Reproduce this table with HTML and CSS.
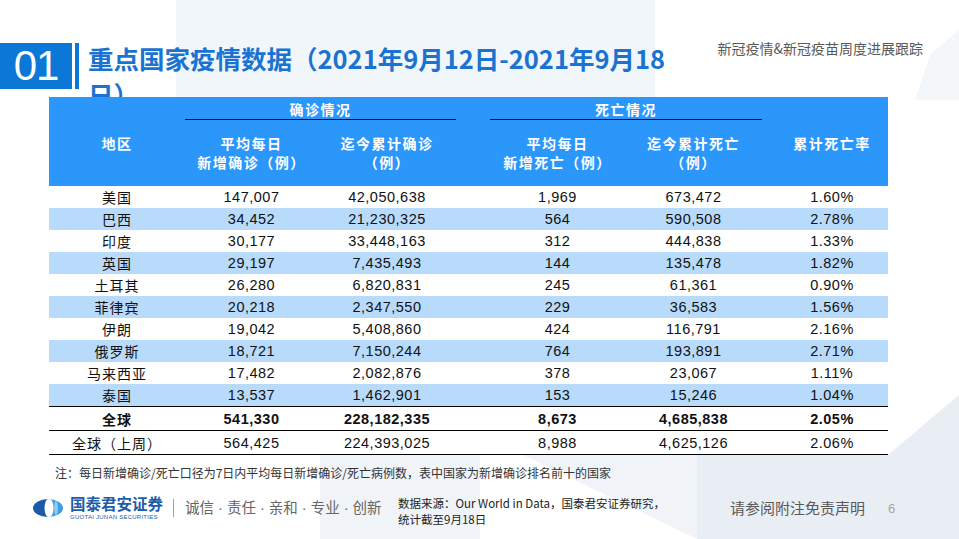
FILE: index.html
```html
<!DOCTYPE html>
<html lang="zh-CN">
<head>
<meta charset="utf-8">
<title>重点国家疫情数据</title>
<link rel="stylesheet" href="styles.css">
</head>
<body>
<div class="bg">
  <svg width="959" height="539" viewBox="0 0 959 539">
    <rect x="176" y="0" width="479" height="100" fill="#f1f6fb"/>
    <polygon points="930,55 959,30 959,100 915,100" fill="#f4f7fa"/>
    <rect x="320" y="455" width="639" height="84" fill="#f0f4f9"/>
    <polygon points="480,455 523,455 697,539 480,539" fill="#ffffff"/>
    <polygon points="697,455 888,455 959,395 959,539 697,539" fill="#e9eef5"/>
  </svg>
</div>
<div class="page">
  <header class="top">
    <div class="badge">01</div>
    <div class="badge-bar"></div>
    <h1 class="title">重点国家疫情数据（2021年9月12日-2021年9月18<br>日）</h1>
    <div class="subtitle">新冠疫情&amp;新冠疫苗周度进展跟踪</div>
  </header>

  <div class="table">
    <div class="thead">
      <div class="grp grp-confirm">确诊情况</div>
      <div class="grp grp-death">死亡情况</div>
      <div class="th c1">地区</div>
      <div class="th c2">平均每日<br>新增确诊（例）</div>
      <div class="th c3">迄今累计确诊<br>（例）</div>
      <div class="th c4"></div>
      <div class="th c5">平均每日<br>新增死亡（例）</div>
      <div class="th c6">迄今累计死亡<br>（例）</div>
      <div class="th c7">累计死亡率</div>
    </div>
    <div class="tr"><div class="name">美国</div><div class="num">147,007</div><div class="num">42,050,638</div><div></div><div class="num">1,969</div><div class="num">673,472</div><div class="num pct">1.60%</div></div>
    <div class="tr alt"><div class="name">巴西</div><div class="num">34,452</div><div class="num">21,230,325</div><div></div><div class="num">564</div><div class="num">590,508</div><div class="num pct">2.78%</div></div>
    <div class="tr"><div class="name">印度</div><div class="num">30,177</div><div class="num">33,448,163</div><div></div><div class="num">312</div><div class="num">444,838</div><div class="num pct">1.33%</div></div>
    <div class="tr alt"><div class="name">英国</div><div class="num">29,197</div><div class="num">7,435,493</div><div></div><div class="num">144</div><div class="num">135,478</div><div class="num pct">1.82%</div></div>
    <div class="tr"><div class="name">土耳其</div><div class="num">26,280</div><div class="num">6,820,831</div><div></div><div class="num">245</div><div class="num">61,361</div><div class="num pct">0.90%</div></div>
    <div class="tr alt"><div class="name">菲律宾</div><div class="num">20,218</div><div class="num">2,347,550</div><div></div><div class="num">229</div><div class="num">36,583</div><div class="num pct">1.56%</div></div>
    <div class="tr"><div class="name">伊朗</div><div class="num">19,042</div><div class="num">5,408,860</div><div></div><div class="num">424</div><div class="num">116,791</div><div class="num pct">2.16%</div></div>
    <div class="tr alt"><div class="name">俄罗斯</div><div class="num">18,721</div><div class="num">7,150,244</div><div></div><div class="num">764</div><div class="num">193,891</div><div class="num pct">2.71%</div></div>
    <div class="tr"><div class="name">马来西亚</div><div class="num">17,482</div><div class="num">2,082,876</div><div></div><div class="num">378</div><div class="num">23,067</div><div class="num pct">1.11%</div></div>
    <div class="tr alt"><div class="name">泰国</div><div class="num">13,537</div><div class="num">1,462,901</div><div></div><div class="num">153</div><div class="num">15,246</div><div class="num pct">1.04%</div></div>
    <div class="tr total"><div class="name">全球</div><div class="num">541,330</div><div class="num">228,182,335</div><div></div><div class="num">8,673</div><div class="num">4,685,838</div><div class="num pct">2.05%</div></div>
    <div class="tr prev"><div class="name">全球（上周）</div><div class="num">564,425</div><div class="num">224,393,025</div><div></div><div class="num">8,988</div><div class="num">4,625,126</div><div class="num pct">2.06%</div></div>
  </div>

  <p class="note">注：每日新增确诊/死亡口径为7日内平均每日新增确诊/死亡病例数，表中国家为新增确诊排名前十的国家</p>

  <footer class="foot">
    <svg class="logo" width="30" height="18" viewBox="0 0 30 18">
      <defs><clipPath id="lg"><ellipse cx="15" cy="9" rx="15" ry="9"/></clipPath></defs>
      <g clip-path="url(#lg)">
        <rect x="0" y="0" width="15" height="18" fill="#1b5aa6"/>
        <rect x="15" y="0" width="15" height="18" fill="#3f9fe2"/>
        <ellipse cx="16" cy="9" rx="4.5" ry="9.5" fill="#ffffff"/>
        <ellipse cx="23" cy="9" rx="2" ry="7" fill="#8fcaf2"/>
      </g>
    </svg>
    <div class="brand">
      <div class="brand-cn">国泰君安证券</div>
      <div class="brand-en">GUOTAI JUNAN SECURITIES</div>
    </div>
    <div class="sep"></div>
    <div class="slogan">诚信 · 责任 · 亲和 · 专业 · 创新</div>
    <div class="source">
      <div class="src-line">数据来源：Our World in Data，国泰君安证券研究，</div>
      <div class="src-line">统计截至9月18日</div>
    </div>
    <div class="disclaimer">请参阅附注免责声明</div>
    <div class="pageno">6</div>
  </footer>
</div>
</body>
</html>
```

FILE: styles.css
```css
* {
  box-sizing: border-box;
  margin: 0;
  padding: 0;
}

html, body {
  width: 959px;
  height: 539px;
  overflow: hidden;
  background: #ffffff;
}

body {
  position: relative;
  font-family: "Noto Sans CJK SC", "Noto Sans", sans-serif;
  color: #222;
}

.bg {
  position: absolute;
  left: 0;
  top: 0;
  z-index: 0;
  line-height: 0;
}

.page {
  position: relative;
  z-index: 1;
  padding-top: 40px;
}

/* ---------- header ---------- */
.top {
  display: flex;
  align-items: flex-start;
  height: 57px;
}

.badge {
  width: 72px;
  height: 46px;
  margin-top: 3px;
  background: #0b77d6;
  color: #fff;
  font-family: "Liberation Sans", sans-serif;
  font-size: 42px;
  line-height: 46px;
  letter-spacing: -1px;
  text-align: center;
}

.badge-bar {
  width: 4px;
  height: 46px;
  margin: 3px 9px 0 3px;
  background: #0b77d6;
}

.title {
  font-size: 25.5px;
  line-height: 36px;
  font-weight: bold;
  color: #1a73d0;
  white-space: nowrap;
}

.subtitle {
  margin-left: auto;
  margin-right: 36px;
  font-size: 14px;
  line-height: 16px;
  color: #595959;
}

/* ---------- table ---------- */
.table {
  position: relative;
  z-index: 2;
  margin-left: 49px;
  width: 839px;
  --cols: 136px 133px 138px 34px 135px 137px 126px;
}

.thead {
  display: grid;
  grid-template-columns: var(--cols);
  grid-template-rows: auto 1fr;
  height: 89px;
  background: #2b97fb;
  color: #fff;
  font-weight: bold;
  font-size: 14px;
  letter-spacing: 1.5px;
  text-align: center;
}

.grp {
  grid-row: 1;
  padding-top: 3px;
  line-height: 19px;
  border-bottom: 1.5px solid #111;
}

.grp-confirm { grid-column: 2 / 4; }
.grp-death { grid-column: 5 / 7; }

.th {
  grid-row: 2;
  padding-top: 14px;
  line-height: 19px;
}

.th.c7 { padding-left: 14px; }

.tr {
  display: grid;
  grid-template-columns: var(--cols);
  align-items: center;
  height: 22px;
  background: #fff;
  text-align: center;
  color: #111;
}

.tr.alt { background: #b8dafb; }

.tr.total {
  height: 24px;
  border-top: 1.5px solid #000;
  font-weight: bold;
}

.tr.prev {
  height: 25px;
  border-top: 1px solid #000;
  border-bottom: 1px solid #000;
}

.name {
  font-size: 14px;
  letter-spacing: 1px;
  line-height: 20px;
}

.num {
  font-family: "Liberation Sans", sans-serif;
  font-size: 14.5px;
  letter-spacing: 0.5px;
  line-height: 20px;
}

.pct { padding-left: 14px; }

/* ---------- note ---------- */
.note {
  margin: 9px 0 0 55px;
  font-size: 12px;
  line-height: 17px;
  color: #333;
}

/* ---------- footer ---------- */
.foot {
  display: flex;
  align-items: center;
  height: 26px;
  margin-top: 14px;
  padding-left: 33px;
}

.logo { flex: none; }

.brand {
  margin-left: 7px;
  width: 97px;
}

.brand-cn {
  font-size: 15.5px;
  line-height: 16px;
  font-weight: bold;
  color: #1f5ca8;
  white-space: nowrap;
}

.brand-en {
  margin-top: 3px;
  font-family: "Liberation Sans", sans-serif;
  font-size: 6px;
  line-height: 7px;
  letter-spacing: 0.25px;
  color: #1f5ca8;
  white-space: nowrap;
}

.sep {
  width: 1px;
  height: 18px;
  margin-left: 6px;
  background: #a0a0a0;
}

.slogan {
  margin-left: 11px;
  width: 195px;
  font-family: "Liberation Sans", "Noto Sans CJK SC", sans-serif;
  font-size: 14.5px;
  line-height: 20px;
  color: #666;
  white-space: nowrap;
  flex: none;
}

.source {
  margin-left: 18px;
  margin-top: 6px;
  width: 300px;
  font-size: 11.5px;
  color: #222;
  white-space: nowrap;
  flex: none;
}

.src-line {
  line-height: 16px;
}

.disclaimer {
  margin-left: 32px;
  font-size: 15px;
  line-height: 20px;
  color: #595959;
  white-space: nowrap;
}

.pageno {
  margin-left: 23px;
  font-family: "Liberation Sans", sans-serif;
  font-size: 13px;
  color: #a6a6a6;
}
```
